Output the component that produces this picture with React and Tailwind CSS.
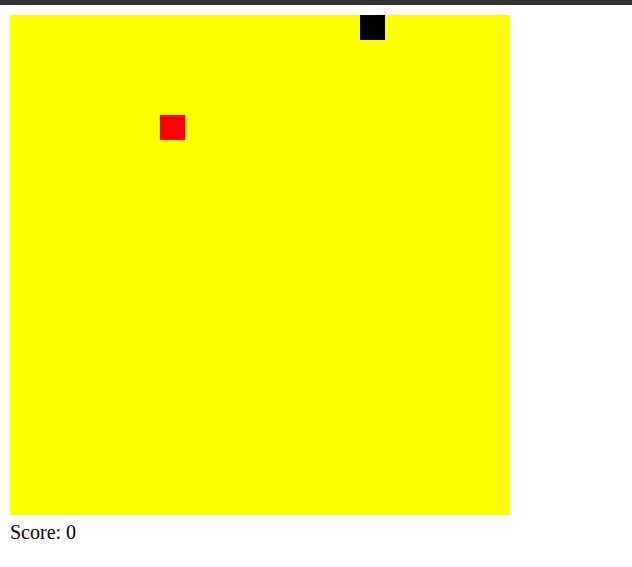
export default function App() {
  return (
    <div className="min-h-[567px] bg-white" style={{ fontFamily: '"Liberation Serif", serif' }}>
      <div className="h-[5px] bg-[#333333]" />
      <div className="pl-[10px] pt-[10px]">
        <div className="relative w-[500px] h-[500px] bg-[#ffff00]">
          <div className="absolute left-[350px] top-0 w-[25px] h-[25px] bg-black" />
          <div className="absolute left-[150px] top-[100px] w-[25px] h-[25px] bg-[#ff0000]" />
        </div>
        <div className="mt-[6px] text-[20px] leading-[23px] text-black">Score: 0</div>
      </div>
    </div>
  );
}
